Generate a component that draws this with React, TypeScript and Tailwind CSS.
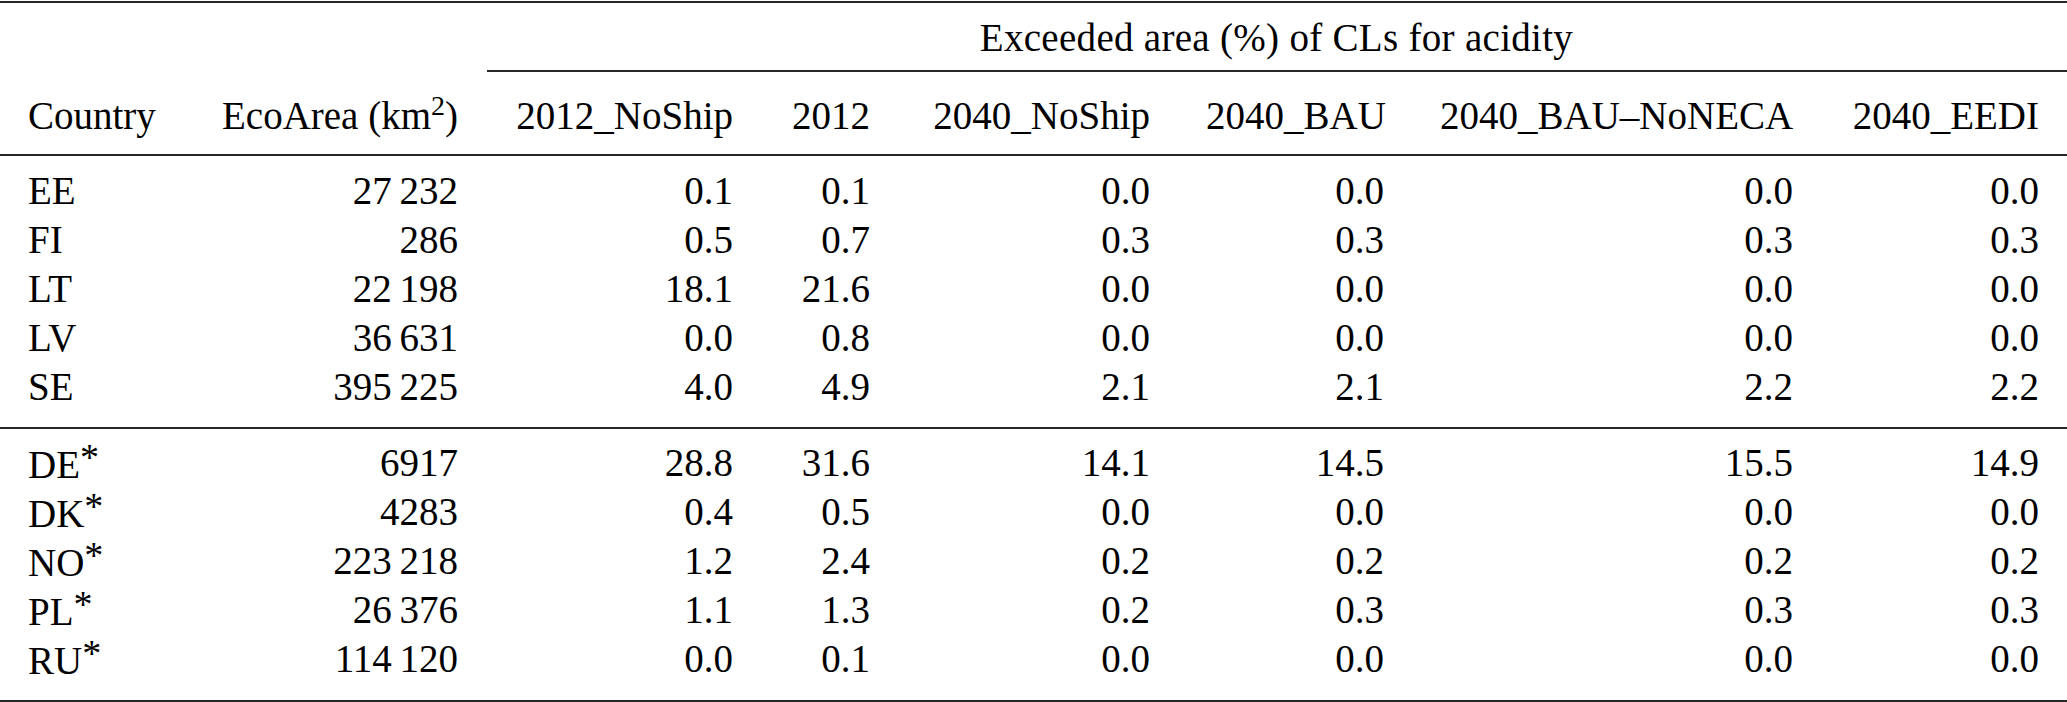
import React from "react";

const cols = "grid grid-cols-[185px_301px_275px_137px_280px_234px_409px_246px]";

type Row = [string, string, string, string, string, string, string, string];

const groupA: Row[] = [
  ["EE", "27\u2009232", "0.1", "0.1", "0.0", "0.0", "0.0", "0.0"],
  ["FI", "286", "0.5", "0.7", "0.3", "0.3", "0.3", "0.3"],
  ["LT", "22\u2009198", "18.1", "21.6", "0.0", "0.0", "0.0", "0.0"],
  ["LV", "36\u2009631", "0.0", "0.8", "0.0", "0.0", "0.0", "0.0"],
  ["SE", "395\u2009225", "4.0", "4.9", "2.1", "2.1", "2.2", "2.2"],
];

const groupB: Row[] = [
  ["DE", "6917", "28.8", "31.6", "14.1", "14.5", "15.5", "14.9"],
  ["DK", "4283", "0.4", "0.5", "0.0", "0.0", "0.0", "0.0"],
  ["NO", "223\u2009218", "1.2", "2.4", "0.2", "0.2", "0.2", "0.2"],
  ["PL", "26\u2009376", "1.1", "1.3", "0.2", "0.3", "0.3", "0.3"],
  ["RU", "114\u2009120", "0.0", "0.1", "0.0", "0.0", "0.0", "0.0"],
];

function DataRow({ row, star }: { row: Row; star?: boolean }) {
  return (
    <div className={`${cols} h-[49px] leading-[49px]`}>
      <div className="px-[28px] text-left whitespace-nowrap">
        {row[0]}
        {star && (
          <span className="text-[38px] leading-none align-[8px]">*</span>
        )}
      </div>
      {row.slice(1).map((v, i) => (
        <div key={i} className="px-[28px] text-right whitespace-nowrap">
          {v}
        </div>
      ))}
    </div>
  );
}

export default function App() {
  const headers = [
    "2012_NoShip",
    "2012",
    "2040_NoShip",
    "2040_BAU",
    "2040_BAU\u2013NoNECA",
    "2040_EEDI",
  ];
  return (
    <div
      className="w-[2067px] h-[702px] bg-white text-black text-[39px] overflow-hidden"
      style={{ fontFamily: '"Liberation Serif", "Times New Roman", serif' }}
    >
      <div className="flex flex-col">
        <div className="mt-[1px] h-[2px] bg-[#262626]" />
        <div className={`${cols} mt-[10px] h-[49px] leading-[49px]`}>
          <div className="col-start-3 col-span-6 text-center whitespace-nowrap tracking-[0.3px]">
            Exceeded area (%) of CLs for acidity
          </div>
        </div>
        <div className="mt-[8px] ml-[487px] h-[2px] bg-[#262626]" />
        <div className={`${cols} mt-[19px] h-[49px] leading-[49px]`}>
          <div className="px-[28px] text-left whitespace-nowrap">Country</div>
          <div className="px-[28px] text-right whitespace-nowrap">
            EcoArea (km
            <span className="text-[28px] leading-none align-super">2</span>)
          </div>
          {headers.map((h) => (
            <div key={h} className="px-[28px] text-right whitespace-nowrap">
              {h}
            </div>
          ))}
        </div>
        <div className="mt-[14px] h-[2px] bg-[#262626]" />
        <div className="mt-[10px] flex flex-col">
          {groupA.map((r) => (
            <DataRow key={r[0]} row={r} />
          ))}
        </div>
        <div className="mt-[16px] h-[2px] bg-[#262626]" />
        <div className="mt-[9px] flex flex-col">
          {groupB.map((r) => (
            <DataRow key={r[0]} row={r} star />
          ))}
        </div>
        <div className="mt-[17px] h-[2px] bg-[#262626]" />
      </div>
    </div>
  );
}
